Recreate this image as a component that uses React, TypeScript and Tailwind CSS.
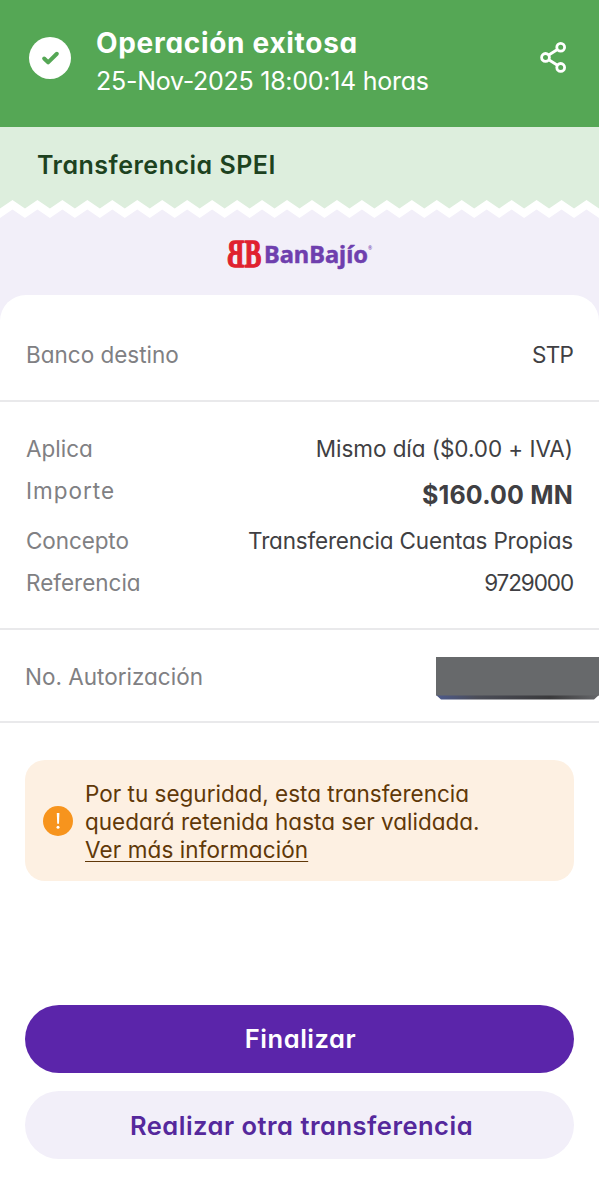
import { Check } from "lucide-react";

const TEETH = 24;
const TOOTH = 599 / TEETH;

function zigzag(peak: number, valley: number) {
  let points = `0,${valley}`;
  for (let i = 0; i < TEETH; i++) {
    points += ` ${(i + 0.5) * TOOTH},${peak} ${(i + 1) * TOOTH},${valley}`;
  }
  return points;
}

function TornEdge() {
  return (
    <svg className="block h-5 w-full" viewBox="0 0 599 20" preserveAspectRatio="none">
      <rect width="599" height="20" fill="#ddeedd" />
      <polygon points={`${zigzag(1, 9.5)} 599,20 0,20`} fill="#ffffff" />
      <polygon points={`${zigzag(10.5, 19)} 599,20 0,20`} fill="#f2eff9" />
    </svg>
  );
}

function ShareIcon() {
  return (
    <svg className="h-8 w-7" viewBox="0 0 28 32" fill="none" stroke="#ffffff" strokeWidth="2.8">
      <circle cx="5.5" cy="16.4" r="3.9" />
      <circle cx="20.7" cy="6.3" r="3.9" />
      <circle cx="20.7" cy="26.4" r="3.9" />
      <path d="M8.8 14 17.4 8.5M8.8 18.7l8.6 5.5" />
    </svg>
  );
}

function Logo() {
  return (
    <div className="flex h-8 items-center justify-center">
      <svg className="h-12 w-[146px] overflow-visible" viewBox="0 -8 146 48">
        <g fill="#e0212f" stroke="#e0212f" strokeWidth="1.3" strokeLinejoin="round" fontFamily="Liberation Serif, serif" fontWeight="700" fontSize="39.5">
          <text transform="translate(17.3 28.4) scale(-0.64 1)">B</text>
          <text transform="translate(17.5 28.4) scale(0.64 1)">B</text>
        </g>
        <text x="37" y="23.5" textLength="104" lengthAdjust="spacingAndGlyphs" fill="#6f3fae" stroke="#6f3fae" strokeWidth="0.5" fontFamily="Noto Sans, sans-serif" fontWeight="700" fontSize="24">
          BanBajío
        </text>
        <text x="141" y="11" fill="#6f3fae" fontFamily="Noto Sans, sans-serif" fontSize="5">®</text>
      </svg>
    </div>
  );
}

type RowProps = {
  label: string;
  labelClass?: string;
  value: string;
  valueClass: string;
  className: string;
};

function Row({ label, labelClass = "", value, valueClass, className }: RowProps) {
  return (
    <div className={`flex items-center justify-between px-[26px] ${className}`}>
      <span className={`text-[#808083] ${labelClass}`}>{label}</span>
      <span className={`text-[#403f43] ${valueClass}`}>{value}</span>
    </div>
  );
}

export default function App() {
  return (
    <main className="flex h-[1200px] w-[599px] flex-col overflow-hidden bg-white font-['Inter',sans-serif] text-[22.5px] leading-7 whitespace-nowrap [font-feature-settings:'cv11']">
      <header className="flex h-[127px] items-start bg-[#55a755] pr-[31px] pl-[29px] text-white">
        <div className="mt-[37px] flex size-[42px] items-center justify-center rounded-full bg-white">
          <Check className="size-[19px] text-[#55a755]" strokeWidth={5} />
        </div>
        <div className="mt-6 ml-[25px] flex-1">
          <h1 className="text-[28px] leading-[38px] font-bold tracking-[0.7px]">Operación exitosa</h1>
          <p className="text-[25px] leading-[38px] tracking-[-0.27px]">25-Nov-2025 18:00:14 horas</p>
        </div>
        <button className="mt-[41px]" type="button" aria-label="Compartir">
          <ShareIcon />
        </button>
      </header>

      <div className="flex h-[72px] items-center bg-[#ddeedd] pt-1 pl-[37px]">
        <h2 className="text-[25px] font-semibold tracking-[0.5px] text-[#1d421f]">Transferencia SPEI</h2>
      </div>
      <TornEdge />

      <section className="flex-1 bg-[#f2eff9] pt-5">
        <Logo />
        <div className="mt-6 h-full rounded-t-[26px] bg-white">
          <Row label="Banco destino" value="STP" valueClass="tracking-[-0.8px]" className="h-[105px] pt-3.5" />
          <div className="border-y-2 border-[#e9e9eb] pt-[26px] pb-[25px]">
            <Row label="Aplica" value="Mismo día ($0.00 + IVA)" valueClass="tracking-[-0.05px]" className="h-[42px]" />
            <Row label="Importe" labelClass="-mt-2 tracking-[1px]" value="$160.00 MN" valueClass="text-[25px] font-bold tracking-[0.2px]" className="h-[49px]" />
            <Row label="Concepto" labelClass="tracking-[-0.1px]" value="Transferencia Cuentas Propias" valueClass="tracking-[-0.18px]" className="h-[42px] pt-0.5" />
            <Row label="Referencia" value="9729000" valueClass="tracking-[-1.1px]" className="h-[42px] pt-0.5" />
          </div>
          <div className="flex h-[93px] items-center justify-between border-b-2 border-[#e9e9eb] pl-[25px]">
            <span className="pt-0.5 text-[#808083]">No. Autorización</span>
            <svg className="mt-1.5 h-[43px] w-[164px]" viewBox="0 0 164 43">
              <defs>
                <linearGradient id="edge">
                  <stop offset="0" stopColor="#4d5a8c" />
                  <stop offset="0.25" stopColor="#4b4d58" />
                  <stop offset="0.7" stopColor="#3a3a3c" />
                  <stop offset="1" stopColor="#66676a" />
                </linearGradient>
              </defs>
              <path d="M1 38h163l-5 4.5H6z" fill="url(#edge)" />
              <path d="M1 0h163v38.5H1z" fill="#67696b" />
            </svg>
          </div>

          <div className="mx-[25px] mt-[37px] flex h-[121px] items-center rounded-[20px] bg-[#fdf0e2] pl-[18px]">
            <div className="flex size-[30px] items-center justify-center rounded-full bg-[#f7941d]">
              <svg className="h-4 w-1" viewBox="0 0 4 16" fill="#ffffff">
                <path d="M.8 0h2.6L3 10.8H1.2z" />
                <circle cx="2" cy="14.2" r="1.5" />
              </svg>
            </div>
            <p className="ml-3 pt-0.5 text-[#603808]">
              Por tu seguridad, esta transferencia
              <br />
              quedará retenida hasta ser validada.
              <br />
              <a className="tracking-[0.1px] underline decoration-[1.3px] underline-offset-[3px]">Ver más información</a>
            </p>
          </div>

          <div className="mx-[25px] mt-[124px] flex flex-col gap-[18px] text-[25.5px] font-semibold">
            <button className="h-[68px] rounded-full bg-[#5b25aa] pl-0.5 tracking-[0.55px] text-white" type="button">
              Finalizar
            </button>
            <button className="h-[68px] rounded-full bg-[#f2eff9] pt-0.5 pl-1 tracking-[0.5px] text-[#55289c]" type="button">
              Realizar otra transferencia
            </button>
          </div>
        </div>
      </section>
    </main>
  );
}
